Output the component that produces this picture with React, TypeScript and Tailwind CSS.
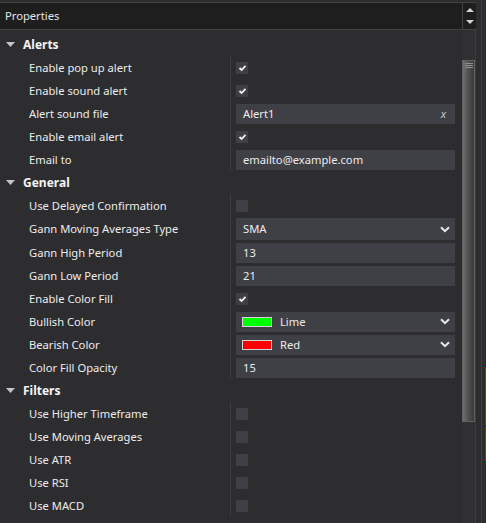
import React from 'react';

type Row =
  | { label: string; kind: 'check'; checked: boolean }
  | { label: string; kind: 'text'; value: string; clear?: boolean }
  | { label: string; kind: 'select'; value: string; swatch?: string; tall?: boolean };

interface Section {
  title: string;
  rows: Row[];
}

const sections: Section[] = [
  {
    title: 'Alerts',
    rows: [
      { label: 'Enable pop up alert', kind: 'check', checked: true },
      { label: 'Enable sound alert', kind: 'check', checked: true },
      { label: 'Alert sound file', kind: 'text', value: 'Alert1', clear: true },
      { label: 'Enable email alert', kind: 'check', checked: true },
      { label: 'Email to', kind: 'text', value: 'emailto@example.com' },
    ],
  },
  {
    title: 'General',
    rows: [
      { label: 'Use Delayed Confirmation', kind: 'check', checked: false },
      { label: 'Gann Moving Averages Type', kind: 'select', value: 'SMA', tall: true },
      { label: 'Gann High Period', kind: 'text', value: '13' },
      { label: 'Gann Low Period', kind: 'text', value: '21' },
      { label: 'Enable Color Fill', kind: 'check', checked: true },
      { label: 'Bullish Color', kind: 'select', value: 'Lime', swatch: 'bg-[#00ff00]' },
      { label: 'Bearish Color', kind: 'select', value: 'Red', swatch: 'bg-[#ff0000]' },
      { label: 'Color Fill Opacity', kind: 'text', value: '15' },
    ],
  },
  {
    title: 'Filters',
    rows: [
      { label: 'Use Higher Timeframe', kind: 'check', checked: false },
      { label: 'Use Moving Averages', kind: 'check', checked: false },
      { label: 'Use ATR', kind: 'check', checked: false },
      { label: 'Use RSI', kind: 'check', checked: false },
      { label: 'Use MACD', kind: 'check', checked: false },
    ],
  },
];

function Chevron() {
  return (
    <svg width="10" height="7" viewBox="0 0 10 7" className="shrink-0">
      <path d="M1 1.2 L5 5.2 L9 1.2" fill="none" stroke="#e8e8e8" strokeWidth="2" />
    </svg>
  );
}

function Value({ row }: { row: Row }) {
  if (row.kind === 'check') {
    return (
      <div className="w-[12px] h-[12px] bg-[#3f3f46] flex items-center justify-center">
        {row.checked && (
          <svg width="9" height="8" viewBox="0 0 9 8">
            <path d="M1.5 4 L3.6 6 L7.5 1.8" fill="none" stroke="#f0f0f0" strokeWidth="1.8" />
          </svg>
        )}
      </div>
    );
  }
  if (row.kind === 'text') {
    return (
      <div className="h-[20px] w-full bg-[#3f3f46] flex items-center pl-[7px] pr-[9px]">
        <span className="flex-1">{row.value}</span>
        {row.clear && <span className="italic text-[#c8c8c8] text-[11px]">x</span>}
      </div>
    );
  }
  return (
    <div className={`${row.tall ? 'h-[22px]' : 'h-[20px]'} w-full bg-[#3f3f46] flex items-center pl-[6px] pr-[5px]`}>
      {row.swatch && (
        <span className={`w-[30px] h-[10px] ${row.swatch} border border-[#d4d4d4] mr-[8px] shrink-0`} />
      )}
      <span className={`flex-1 ${row.swatch ? '' : 'pl-[1px]'}`}>{row.value}</span>
      <Chevron />
    </div>
  );
}

export default function App() {
  return (
    <div className="w-[486px] h-[523px] bg-[#2d2d30] flex overflow-hidden text-[11.2px] text-[#ececec] font-['Noto_Sans','Open_Sans',sans-serif] leading-[16px]">
      <div className="w-[476px] flex flex-col">
        <div className="h-[2px] shrink-0" />
        <div className="h-[28px] shrink-0 flex bg-[#1e1e1e] border-y border-[#434346]">
          <div className="flex-1 flex items-center pl-[5px] text-[#e4e4e4]">Properties</div>
          <div className="w-[14px] border-l border-[#434346] flex flex-col items-center justify-center gap-[8px]">
            <svg width="8" height="4" viewBox="0 0 8 4">
              <path d="M0 4 L4 0 L8 4 Z" fill="#d2d2d2" />
            </svg>
            <svg width="8" height="4" viewBox="0 0 8 4">
              <path d="M0 0 L8 0 L4 4 Z" fill="#d2d2d2" />
            </svg>
          </div>
        </div>
        <div className="flex flex-1 min-h-0">
          <div className="w-[462px] pt-[3px]">
            {sections.map(section => (
              <div key={section.title}>
                <div className="h-[23px] flex items-center">
                  <svg width="9" height="5" viewBox="0 0 9 5" className="ml-[6px] mr-[8px]">
                    <path d="M0 0 L9 0 L4.5 5 Z" fill="#c4c4c4" />
                  </svg>
                  <span className="font-bold text-[#f4f4f4] text-[12px]">{section.title}</span>
                </div>
                {section.rows.map(row => (
                  <div
                    key={row.label}
                    className={`flex ${row.kind === 'select' && row.tall ? 'h-[24px]' : 'h-[23px]'}`}
                  >
                    <div className="w-[230px] pl-[29px] flex items-center">{row.label}</div>
                    <div className="flex-1 border-l border-[#3c3c40] pl-[5px] pr-[7px] flex items-center">
                      <Value row={row} />
                    </div>
                  </div>
                ))}
              </div>
            ))}
          </div>
          <div className="w-[14px] bg-[#303033] border-r border-[#3c3c40] pt-[30px]">
            <div className="h-[362px] border border-[#626262] bg-gradient-to-r from-[#707070] via-[#4f4f4f] to-[#3b3b3b] flex flex-col items-center gap-[1px] pt-[2px]">
              <div className="w-[8px] h-[1px] bg-[#909090]" />
              <div className="w-[8px] h-[1px] bg-[#909090]" />
              <div className="w-[8px] h-[1px] bg-[#909090]" />
            </div>
          </div>
        </div>
      </div>
      <div className="w-[10px] flex">
        <div className="w-[5px]" />
        <div className="w-[1px] bg-[#3f3f44]" />
        <div className="flex-1 flex flex-col">
          <div className="h-[367px]" />
          <div className="ml-auto w-[1px] h-[58px] bg-[#b01818]" />
          <div className="h-[2px]" />
          <div className="ml-auto w-[1px] h-[34px] bg-[#b01818]" />
        </div>
      </div>
    </div>
  );
}
